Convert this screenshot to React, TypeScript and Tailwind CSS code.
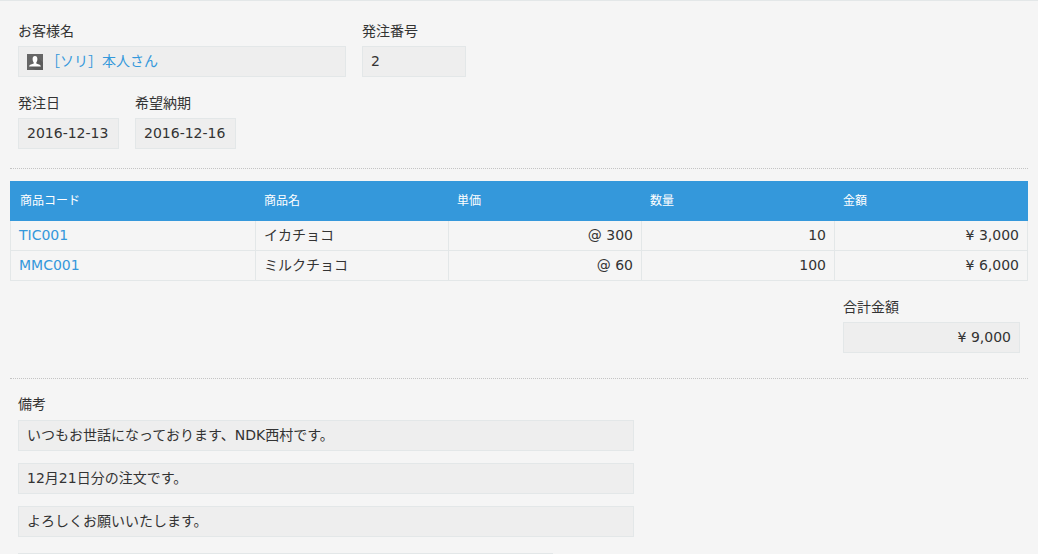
const font = { fontFamily: '"DejaVu Sans", "Noto Sans CJK JP", sans-serif' }

function Field({ label, value, className }: { label: string; value: React.ReactNode; className?: string }) {
  return (
    <div className={className}>
      <div className="h-[26px] pt-[1px] text-[14px] leading-[20px] text-[#333]">{label}</div>
      <div className="h-[31px] border border-[#e3e7e8] bg-[#eee] px-2 text-[14px] leading-[29px] whitespace-nowrap text-[#333]">
        {value}
      </div>
    </div>
  )
}

function Note({ children }: { children: string }) {
  return (
    <div className="h-[31px] w-[616px] border border-[#e3e7e8] bg-[#eee] px-2 text-[14px] leading-[29px] text-[#333]">
      {children}
    </div>
  )
}

function UserIcon() {
  return (
    <svg width="16" height="16" viewBox="0 0 16 16" className="mt-[1px] shrink-0">
      <rect width="16" height="16" fill="#666" />
      <path d="M10.4 3 16 8.6V16H9L2.4 12.6l4-3z" fill="#5c5c5c" />
      <path d="M8 2c1.5 0 2.4 1.1 2.4 3S9.7 8 9.3 8.6v1c1.5.6 4.3.9 4.6 3H2.1c.3-2.1 3.1-2.4 4.6-3v-1C6.3 8 5.6 6.900 5.6 5S6.500 2 8 2z" fill="#fff" />
    </svg>
  )
}

const rows = [
  { code: 'TIC001', name: 'イカチョコ', price: '@ 300', qty: '10', amount: '¥ 3,000' },
  { code: 'MMC001', name: 'ミルクチョコ', price: '@ 60', qty: '100', amount: '¥ 6,000' },
]

const headers = ['商品コード', '商品名', '単価', '数量', '金額']

export default function App() {
  return (
    <div className="h-[554px] overflow-hidden border-t border-[#e3e7e8] bg-[#f5f5f5] px-[10px]" style={font}>

      {/* order info */}
      <div className="flex gap-4 px-2 pt-[19px]">
        <Field
          label="お客様名"
          className="w-[328px]"
          value={
            <span className="flex h-[29px] items-center gap-[3px] text-[#3498db]">
              <UserIcon />
              <span>［ソリ］本人さん</span>
            </span>
          }
        />
        <Field label="発注番号" value="2" className="w-[104px]" />
      </div>

      <div className="flex gap-4 px-2 pt-[15px]">
        <Field label="発注日" value="2016-12-13" className="w-[101px]" />
        <Field label="希望納期" value="2016-12-16" className="w-[101px]" />
      </div>

      <div className="mt-[19px] border-t border-dotted border-[#c4c4c4]" />

      {/* items */}
      <table className="mt-3 w-[1018px] table-fixed border-separate border-spacing-0">
        <colgroup>
          <col className="w-[246px]" />
          <col className="w-[193px]" />
          <col className="w-[193px]" />
          <col className="w-[193px]" />
          <col className="w-[193px]" />
        </colgroup>
        <thead>
          <tr className="h-[40px] bg-[#3498db]">
            {headers.map((h) => (
              <th key={h} className="pl-2 text-left text-[12px] font-normal text-white first:pl-[10px]">
                {h}
              </th>
            ))}
          </tr>
        </thead>
        <tbody>
          {rows.map((r) => (
            <tr key={r.code} className="h-[30px] text-[14px] text-[#333]">
              <td className="border-r border-b border-l border-[#e3e7e8] px-2 text-[#3498db]">{r.code}</td>
              <td className="border-r border-b border-[#e3e7e8] px-2">{r.name}</td>
              <td className="border-r border-b border-[#e3e7e8] px-2 text-right">{r.price}</td>
              <td className="border-r border-b border-[#e3e7e8] px-2 text-right">{r.qty}</td>
              <td className="border-r border-b border-[#e3e7e8] px-2 text-right">{r.amount}</td>
            </tr>
          ))}
        </tbody>
      </table>

      {/* total */}
      <div className="mt-[15px] flex justify-end pr-2">
        <Field
          label="合計金額"
          className="w-[177px]"
          value={<div className="text-right">¥ 9,000</div>}
        />
      </div>

      <div className="mt-[25px] border-t border-dotted border-[#c4c4c4]" />

      {/* notes */}
      <div className="px-2 pt-[14px]">
        <div className="h-[27px] pt-[1px] text-[14px] leading-[20px] text-[#333]">備考</div>
        <div className="flex flex-col gap-3">
          <Note>いつもお世話になっております、NDK西村です。</Note>
          <Note>12月21日分の注文です。</Note>
          <Note>よろしくお願いいたします。</Note>
          <div className="mt-1 h-[31px] w-[535px] border border-[#e3e7e8] bg-[#eee]" />
        </div>
      </div>

    </div>
  )
}
